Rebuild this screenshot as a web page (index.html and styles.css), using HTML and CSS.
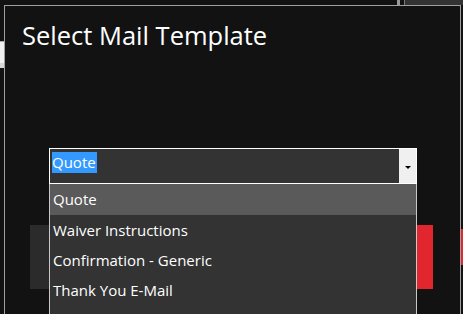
FILE: index.html
```html
<!DOCTYPE html>
<html lang="en">
<head>
  <meta charset="UTF-8" />
  <meta name="viewport" content="width=device-width, initial-scale=1.0"/>
  <title>Select Mail Template</title>
  <link rel="stylesheet" href="styles.css">
</head>
<body>

  <!-- bits of the windows behind the dialog -->
  <div class="behind behind-line"></div>
  <div class="behind behind-panel"></div>
  <div class="behind behind-left"></div>
  <div class="behind behind-red"></div>

  <div class="dialog">
    <h1 class="title">Select Mail Template</h1>

    <div class="combo-wrap">
      <div class="combo">
        <div class="combo-field"><span class="combo-value">Quote</span></div>
        <div class="combo-button"><span class="arrow"></span></div>
      </div>

      <ul class="combo-list">
        <li class="combo-item active">Quote</li>
        <li class="combo-item">Waiver Instructions</li>
        <li class="combo-item">Confirmation - Generic</li>
        <li class="combo-item">Thank You E-Mail</li>
      </ul>
    </div>

    <!-- labels are covered by the open list -->
    <div class="buttons">
      <button class="btn btn-cancel" aria-label="Cancel"></button>
      <button class="btn btn-ok" aria-label="OK"></button>
    </div>
  </div>

</body>
</html>
```

FILE: styles.css
```css
body {
  margin: 0;
  background: #121212;
  font-family: "Open Sans", "Noto Sans", sans-serif;
  color: #fff;
  width: 463px;
  height: 314px;
  overflow: hidden;
  position: relative;
}

.behind {
  position: absolute;
}
.behind-line {
  left: 397px;
  top: 0;
  width: 3px;
  height: 5px;
  background: #9a9a9a;
}
.behind-panel {
  left: 404px;
  top: 0;
  width: 59px;
  height: 5px;
  background: #333;
  border-left: 1px solid #777;
}
.behind-left {
  left: 0;
  top: 41px;
  width: 4px;
  height: 27px;
  background: #f0f0f0;
  border-top: 1px solid #aaa;
  border-bottom: 5px solid #d8d8d8;
  box-sizing: border-box;
}
.behind-red {
  left: 461px;
  top: 229px;
  width: 2px;
  height: 36px;
  background: #e1272d;
}

.dialog {
  position: relative;
  margin: 5px 0 0 4px;
  width: 457px;
  height: 320px;
  box-sizing: border-box;
  border: 1px solid #a0a0a0;
  background: #121212;
}

.title {
  margin: 0;
  padding: 13px 0 0 17px;
  font-size: 25.5px;
  font-weight: normal;
  line-height: 32px;
}

.combo-wrap {
  position: relative;
  margin: 97px 0 0 44px;
  width: 368px;
}

.combo {
  display: flex;
  height: 36px;
  box-sizing: border-box;
  border: 1px solid #fff;
}
.combo-field {
  flex: 1;
  background: #333;
  padding: 2px 0 0 2px;
}
.combo-value {
  display: inline-block;
  background: #3399ff;
  font-size: 15px;
  line-height: 21px;
  padding: 0 1px 0 0;
}
.combo-button {
  width: 17px;
  background: #f0f0f0;
  display: flex;
  align-items: center;
  justify-content: center;
}
.arrow {
  width: 0;
  height: 0;
  margin-top: 2px;
  border-left: 3px solid transparent;
  border-right: 3px solid transparent;
  border-top: 3px solid #000;
}

.combo-list {
  position: absolute;
  top: 36px;
  left: 0;
  width: 368px;
  height: 140px;
  box-sizing: border-box;
  margin: 0;
  padding: 0;
  list-style: none;
  background: #333;
  border-left: 1px solid #c8c8c8;
  border-right: 1px solid #c8c8c8;
  z-index: 1;
}
.combo-item {
  height: 30px;
  line-height: 30px;
  padding-left: 3px;
  font-size: 15px;
}
.combo-item.active {
  height: 31px;
  background: #5a5a5a;
}

.buttons {
  display: flex;
  gap: 23px;
  margin: 41px 0 0 25px;
}
.btn {
  width: 190px;
  height: 64px;
  border: none;
}
.btn-cancel {
  background: #2b2b2b;
}
.btn-ok {
  background: #e1272d;
}
```
